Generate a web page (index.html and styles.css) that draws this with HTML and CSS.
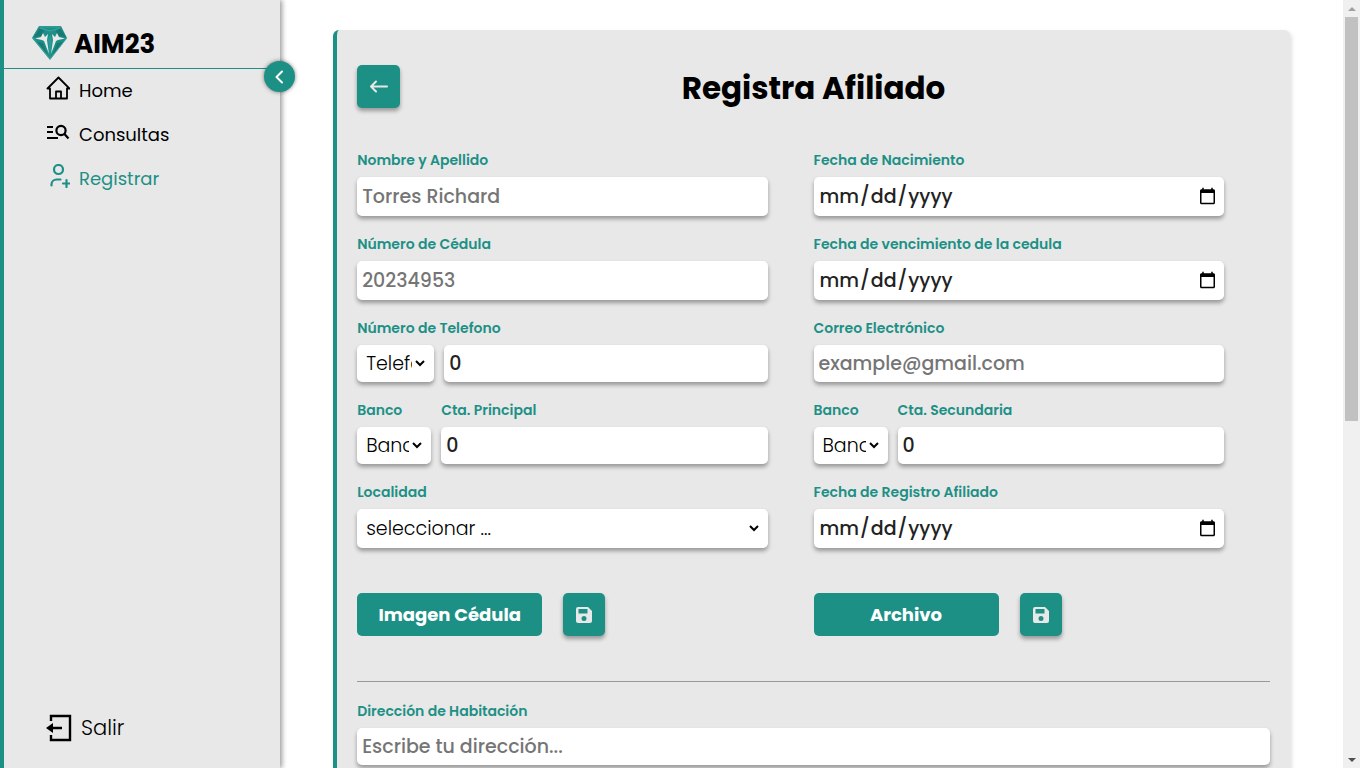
FILE: index.html
```html
<!DOCTYPE html>
<html lang="es">
<head>
  <meta charset="UTF-8">
  <meta name="viewport" content="width=device-width, initial-scale=1.0">
  <title>AIM23 - Registrar</title>
  <link rel="stylesheet" href="styles.css">
</head>
<body>
  <div class="app">

    <!-- Sidebar -->
    <aside class="sidebar">
      <button class="toggle" type="button" aria-label="Ocultar menu">
        <svg width="16" height="16" viewBox="0 0 16 16" fill="none" stroke="currentColor" stroke-width="2" stroke-linecap="round" stroke-linejoin="round"><path d="M10 2.500 4.500 8l5.500 5.500"/></svg>
      </button>

      <div class="brand">
        <svg class="logo" width="36" height="34" viewBox="0 0 36 34">
          <path fill="#1d8f86" d="M7 0h22l6 12-17 22L0 12z"/>
          <path fill="#187a74" d="M2 11 8 2l4 3-2 5zM34 11 28 2l-4 3 2 5zM5 16l10 12-4-11zM31 16l-10 12 4-11z"/>
          <path fill="#e9e9e9" d="M3 12.500 9 11l2-4 2 4 3-3-1 6 2 14-5-13-2-1zM33 12.500 27 11l-2-4-2 4-3-3 1 6-2 14 5-13 2-1z"/>
          <path fill="#2a9a97" d="M18 9l2 5-2 17-2-17z"/>
          <path fill="none" stroke="#4aaeb0" stroke-width=".7" d="M7 1h22M1 12l17 21 17-21M8 2l10 3 10-3"/>
        </svg>
        <span>AIM23</span>
      </div>

      <nav class="menu">
        <a href="#">
          <svg width="24" height="24" viewBox="0 0 24 24" fill="none" stroke="currentColor" stroke-width="1.8" stroke-linecap="round" stroke-linejoin="round"><path d="M1.500 12.500 12.500 1.500l11 11M1.500 12.500H4V22.500h17V12.500h2.500M10 22.500v-7h5v7"/></svg>
          Home
        </a>
        <a href="#">
          <svg width="24" height="24" viewBox="0 0 24 24" fill="none" stroke="currentColor" stroke-width="2.200"><path d="M1 7h6M1 12h6M1 18h11"/><circle cx="15" cy="10.500" r="4.600"/><path d="m18 13.500 4.500 5"/></svg>
          Consultas
        </a>
        <a href="#" class="active">
          <svg width="24" height="24" viewBox="0 0 24 24" fill="none" stroke="currentColor" stroke-width="2.200" stroke-linecap="round"><circle cx="12.500" cy="5.500" r="4.500"/><path d="M5.500 21.500V20.500a5 5 0 0 1 5-5h4M20.500 16v7M17 19.500h7"/></svg>
          Registrar
        </a>
      </nav>

      <a href="#" class="logout">
        <svg width="26" height="28" viewBox="0 0 26 28" fill="none" stroke="currentColor" stroke-width="2.400"><path d="M5 7V2h19v24H5v-5M6 14h10"/><path fill="currentColor" stroke="none" d="M0 14l7-5v10z"/></svg>
        Salir
      </a>
    </aside>

    <!-- Contenido -->
    <main class="content">
      <form class="card">
        <header class="card-header">
          <button class="btn-icon back" type="button" aria-label="Volver">
            <svg width="20" height="16" viewBox="0 0 20 16" fill="none" stroke="currentColor" stroke-width="2" stroke-linecap="round" stroke-linejoin="round"><path d="M18 7.500H2M7 2.500 2 7.500l5 5"/></svg>
          </button>
          <h1>Registra Afiliado</h1>
        </header>

        <div class="fields">
          <div class="field">
            <label for="nombre">Nombre y Apellido</label>
            <input class="tall" type="text" id="nombre" placeholder="Torres Richard">
          </div>
          <div class="field">
            <label for="nacimiento">Fecha de Nacimiento</label>
            <input class="tall" type="date" id="nacimiento">
          </div>

          <div class="field">
            <label for="cedula">Número de Cédula</label>
            <input class="tall" type="text" id="cedula" placeholder="20234953">
          </div>
          <div class="field">
            <label for="vencimiento">Fecha de vencimiento de la cedula</label>
            <input class="tall" type="date" id="vencimiento">
          </div>

          <div class="field">
            <label for="telefono">Número de Telefono</label>
            <div class="phone">
              <select aria-label="Tipo de telefono"><option>Telefono</option></select>
              <input type="text" id="telefono" value="0">
            </div>
          </div>
          <div class="field">
            <label for="correo">Correo Electrónico</label>
            <input type="email" id="correo" placeholder="example@gmail.com">
          </div>

          <div class="account">
            <div>
              <label for="banco1">Banco</label>
              <select id="banco1"><option>Banco</option></select>
            </div>
            <div>
              <label for="cuenta1">Cta. Principal</label>
              <input type="text" id="cuenta1" value="0">
            </div>
          </div>
          <div class="account">
            <div>
              <label for="banco2">Banco</label>
              <select id="banco2"><option>Banco</option></select>
            </div>
            <div>
              <label for="cuenta2">Cta. Secundaria</label>
              <input type="text" id="cuenta2" value="0">
            </div>
          </div>

          <div class="field">
            <label for="localidad">Localidad</label>
            <select class="tall" id="localidad"><option>seleccionar ...</option></select>
          </div>
          <div class="field">
            <label for="registro">Fecha de Registro Afiliado</label>
            <input class="tall" type="date" id="registro">
          </div>
        </div>

        <div class="uploads">
          <div class="upload">
            <button class="btn" type="button">Imagen Cédula</button>
            <button class="btn-icon" type="button" aria-label="Guardar imagen">
              <svg width="18" height="18" viewBox="0 0 18 18"><path fill="currentColor" fill-rule="evenodd" d="M3 1h10l4 4v10a2 2 0 0 1-2 2H3a2 2 0 0 1-2-2V3a2 2 0 0 1 2-2zm.500 2v4.500h9V3zM9 10a2.500 2.500 0 1 0 0 5 2.500 2.500 0 0 0 0-5z"/></svg>
            </button>
          </div>
          <div class="upload">
            <button class="btn" type="button">Archivo</button>
            <button class="btn-icon" type="button" aria-label="Guardar archivo">
              <svg width="18" height="18" viewBox="0 0 18 18"><path fill="currentColor" fill-rule="evenodd" d="M3 1h10l4 4v10a2 2 0 0 1-2 2H3a2 2 0 0 1-2-2V3a2 2 0 0 1 2-2zm.500 2v4.500h9V3zM9 10a2.500 2.500 0 1 0 0 5 2.500 2.500 0 0 0 0-5z"/></svg>
            </button>
          </div>
        </div>

        <hr>

        <label for="direccion">Dirección de Habitación</label>
        <input type="text" id="direccion" placeholder="Escribe tu dirección...">
      </form>
    </main>

    <div class="scrollbar" aria-hidden="true">
      <span class="arrow up"></span>
      <div class="track"><div class="thumb"></div></div>
      <span class="arrow down"></span>
    </div>
  </div>
</body>
</html>
```
FILE: styles.css
```css
* {
  box-sizing: border-box;
  margin: 0;
  padding: 0;
}

:root {
  --main: #1d9086;
  --gray: #e8e8e8;
}

body {
  font-family: Poppins, Inter, sans-serif;
  background: #fff;
}

.app {
  display: flex;
  height: 100vh;
}

/* Sidebar */
.sidebar {
  position: relative;
  z-index: 1;
  flex: none;
  width: 280px;
  display: flex;
  flex-direction: column;
  background: var(--gray);
  border-left: 4px solid var(--main);
  box-shadow: 2px 0 5px rgba(0, 0, 0, 0.4);
}

.toggle {
  position: absolute;
  top: 61px;
  right: -15px;
  width: 31px;
  height: 31px;
  display: flex;
  align-items: center;
  justify-content: center;
  border: none;
  border-radius: 50%;
  background: var(--main);
  color: #fff;
  box-shadow: 0 0 4px rgba(0, 0, 0, 0.5);
}

.brand {
  display: flex;
  align-items: center;
  gap: 6px;
  height: 69px;
  padding: 20px 0 0 28px;
  border-bottom: 1px solid var(--main);
  font-size: 26px;
  font-weight: 700;
}

.logo {
  margin-bottom: 3px;
}

.menu {
  display: flex;
  flex-direction: column;
  margin-top: -1px;
  padding-left: 42px;
}

.menu a {
  display: flex;
  align-items: center;
  gap: 9px;
  height: 44px;
  color: #000;
  font-size: 18px;
  text-decoration: none;
}

.menu a.active {
  color: var(--main);
}

.menu svg {
  margin-bottom: 5px;
}

.logout {
  display: flex;
  align-items: center;
  gap: 9px;
  margin-top: auto;
  padding: 0 0 25px 42px;
  color: #000;
  font-size: 21px;
  font-weight: 300;
  text-decoration: none;
}

/* Formulario */
.content {
  flex: 1;
  min-width: 0;
  padding: 30px 0;
  overflow-y: auto;
  scrollbar-width: none;
}

.card {
  width: 90%;
  margin: 0 auto;
  padding: 35px 20px 20px;
  background: var(--gray);
  border-left: 4px solid var(--main);
  border-radius: 6px;
  box-shadow: 2px 2px 4px rgba(0, 0, 0, 0.12);
}

.card-header {
  display: flex;
  align-items: center;
  height: 43px;
  margin-bottom: 42px;
}

.card-header h1 {
  flex: 1;
  padding: 4px 43px 0 0;
  text-align: center;
  font-size: 31px;
  font-weight: 700;
}

.card-header .back {
  width: 43px;
}

.fields {
  display: grid;
  grid-template-columns: 1fr 1fr;
  row-gap: 18px;
}

.field,
.account {
  width: 90%;
}

label {
  display: block;
  height: 27px;
  line-height: 21px;
  color: var(--main);
  font-size: 14px;
  font-weight: 600;
}

input,
select {
  display: block;
  width: 100%;
  height: 37px;
  border: none;
  border-radius: 5px;
  background: #fff;
  color: #222;
  font-family: inherit;
  font-size: 19px;
  font-weight: 500;
  box-shadow: 0 3px 4px rgba(0, 0, 0, 0.35);
}

input {
  padding: 0 5px;
}

input::placeholder {
  color: #757575;
}

select {
  padding: 0 0 0 5px;
  border-right: 6px solid #fff;
  color: #000;
  font-weight: 300;
}

.tall {
  height: 39px;
}

.phone {
  display: grid;
  grid-template-columns: 77px 1fr;
  gap: 10px;
}

.account {
  display: grid;
  grid-template-columns: 74px 1fr;
  gap: 10px;
}

.uploads {
  display: grid;
  grid-template-columns: 1fr 1fr;
  margin-top: 45px;
}

.upload {
  display: flex;
  gap: 21px;
}

.btn,
.btn-icon {
  height: 43px;
  border: none;
  border-radius: 5px;
  background: var(--main);
  color: #fff;
  font-family: inherit;
}

.btn {
  width: 185px;
  font-size: 18px;
  font-weight: 700;
}

.btn-icon {
  display: flex;
  align-items: center;
  justify-content: center;
  width: 42px;
  color: var(--gray);
  box-shadow: 0 3px 4px rgba(0, 0, 0, 0.35);
}

hr {
  margin: 45px 0 19px;
  border: none;
  border-top: 1px solid #999;
}

/* Barra de scroll */
.scrollbar {
  flex: none;
  display: flex;
  flex-direction: column;
  align-items: center;
  width: 17px;
  background: #f0f0f0;
}

.track {
  flex: 1;
  width: 13px;
}

.thumb {
  height: 55%;
  background: #c1c1c1;
}

.arrow {
  width: 0;
  height: 4px;
  margin: 7px 0 6px;
  border: 4px solid transparent;
  border-top: none;
  border-bottom-color: #a0a0a0;
}

.arrow.down {
  border-top: 4px solid #505050;
  border-bottom: none;
}
```
